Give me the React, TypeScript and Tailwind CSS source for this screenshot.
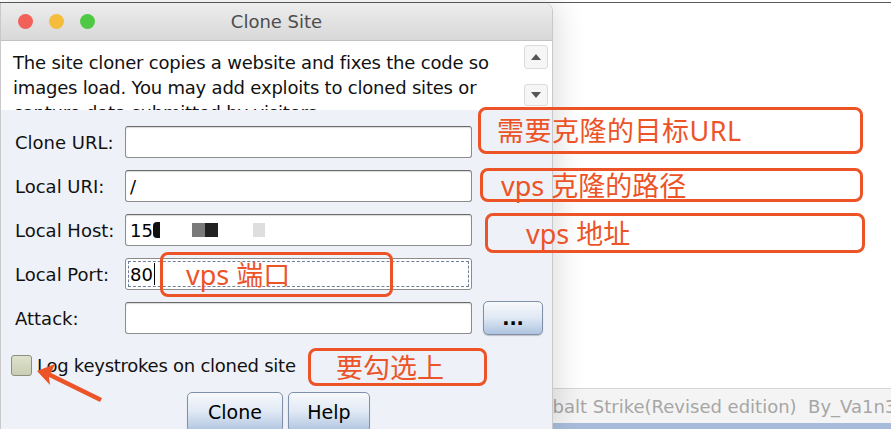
import React from "react";

const ui = { fontFamily: "'DejaVu Sans', Verdana, sans-serif" };
const cn = { fontFamily: "'Noto Sans', 'Noto Sans CJK SC', sans-serif" };

const rows = [
  { label: "Clone URL:", value: "" },
  { label: "Local URI:", value: "/" },
  { label: "Local Host:", value: "host" },
  { label: "Local Port:", value: "80" },
  { label: "Attack:", value: "" },
];

const Field = ({ value }: { value: string }) => {
  if (value === "80") {
    return (
      <div className="w-[347px] h-[32px] rounded-[3px] border border-[#8c8c8c] bg-white p-[2px]">
        <div className="h-full border border-dashed border-[#6f7f99] flex items-center pl-[1px] text-[18px] text-black">
          80<span className="w-[1px] h-[22px] bg-black ml-[1px]" />
        </div>
      </div>
    );
  }
  return (
    <div className="w-[347px] h-[32px] rounded-[3px] border border-[#8c8c8c] border-t-[#6b6b6b] bg-white flex items-center px-[4px] text-[18px] text-black shadow-[inset_0_1px_1px_rgba(0,0,0,0.15)]">
      {value === "host" ? (
        <>
          <span>15</span>
          <span className="w-[7px] h-[16px] bg-[#111] rounded-l-[4px]" />
          <span className="w-[32px]" />
          <span className="w-[13px] h-[14px] bg-[#7a7a7a]" />
          <span className="w-[13px] h-[14px] bg-[#222]" />
          <span className="w-[35px]" />
          <span className="w-[12px] h-[14px] bg-[#dedede]" />
        </>
      ) : (
        value
      )}
    </div>
  );
};

const Note = ({ className, text, textClass }: { className: string; text: string; textClass: string }) => (
  <div className={"absolute z-20 border-[3px] border-[#ec5428] rounded-[8px] flex items-center " + className}>
    <span className={"text-[#ec5428] text-[27px] leading-none " + textClass} style={cn}>
      {text}
    </span>
  </div>
);

const BlueButton = ({ children, className }: { children: React.ReactNode; className: string }) => (
  <div
    className={
      "rounded-[5px] border border-[#7f90a8] bg-gradient-to-b from-[#f7f9fc] via-[#dfe8f4] to-[#afc4e0] flex items-center justify-center text-[19px] text-black shadow-[0_1px_1px_rgba(0,0,0,0.2)] " +
      className
    }
  >
    {children}
  </div>
);

export default function App() {
  return (
    <div className="relative w-[891px] h-[429px] overflow-hidden bg-white pt-[2px]" style={ui}>
      <div className="h-full border-t border-[#5a5a5a] flex">
        {/* dialog */}
        <div className="relative z-10 w-[553px] shrink-0 flex flex-col bg-[#eef1f8] border-l border-r border-[#c9c9c9] rounded-tr-[8px] shadow-[6px_0_28px_rgba(0,0,0,0.13)]">
          <div className="h-[38px] shrink-0 rounded-tr-[8px] bg-gradient-to-b from-[#ededed] to-[#d8d8d8] border-b border-[#c2c2c2] flex items-center relative">
            <div className="flex gap-[16px] pl-[17px]">
              <span className="w-[15px] h-[15px] rounded-full bg-[#f1615a]" />
              <span className="w-[15px] h-[15px] rounded-full bg-[#f6bd3c]" />
              <span className="w-[15px] h-[15px] rounded-full bg-[#4fc844]" />
            </div>
            <span className="absolute left-0 right-0 text-center text-[18px] text-[#4d4d4d]">Clone Site</span>
          </div>
          <div className="h-[69px] shrink-0 bg-white flex overflow-hidden">
            <p className="flex-1 pl-[12px] pr-[6px] pt-[9px] text-[18px] leading-[25px] text-[#111] tracking-[-0.2px]">
              The site cloner copies a website and fixes the code so images load. You may add exploits to cloned sites or
              capture data submitted by visitors
            </p>
            <div className="w-[28px] flex flex-col justify-between py-[4px] pr-[4px]">
              <div className="h-[24px] rounded-[3px] border border-[#dcdcdc] bg-[#f6f6f6] flex items-center justify-center">
                <svg width="10" height="6" viewBox="0 0 10 6">
                  <path d="M0 6 L5 0 L10 6 Z" fill="#555" />
                </svg>
              </div>
              <div className="h-[22px] rounded-[3px] border border-[#dcdcdc] bg-[#f6f6f6] flex items-center justify-center">
                <svg width="10" height="6" viewBox="0 0 10 6">
                  <path d="M0 0 L5 6 L10 0 Z" fill="#555" />
                </svg>
              </div>
            </div>
          </div>
          <div className="flex flex-col gap-[12px] pt-[16px] pl-[14px]">
            {rows.map((r) => (
              <div key={r.label} className="flex items-center h-[32px]">
                <span className="w-[110px] text-[18px] text-[#111]">{r.label}</span>
                <Field value={r.value} />
                {r.label === "Attack:" && (
                  <BlueButton className="ml-[11px] w-[60px] h-[34px] font-bold text-[15px]">...</BlueButton>
                )}
              </div>
            ))}
          </div>
          <div className="flex items-center gap-[5px] pl-[10px] pt-[18px]">
            <span className="w-[21px] h-[21px] rounded-[3px] border border-[#8b907c] bg-gradient-to-b from-[#dfe2cc] to-[#c9cdb2]" />
            <span className="text-[18px] text-[#111] tracking-[-0.25px]">Log keystrokes on cloned site</span>
          </div>
          <div className="flex gap-[5px] pl-[186px] pt-[13px]">
            <BlueButton className="w-[96px] h-[40px]">Clone</BlueButton>
            <BlueButton className="w-[82px] h-[40px]">Help</BlueButton>
          </div>
        </div>

        {/* background window */}
        <div className="flex-1 flex flex-col">
          <div className="flex-1 bg-white" />
          <div className="h-[35px] bg-[#f4f4f4] border-t border-[#d6d6d6] flex items-center overflow-hidden">
            <span className="-ml-[24px] whitespace-nowrap text-[18px] text-[#a6a6a6]">
              Cobalt Strike(Revised edition)&nbsp; By_Va1n3
            </span>
          </div>
          <div className="h-[6px] bg-[#a7bcdb]" />
        </div>
      </div>

      {/* annotations */}
      <Note className="left-[478px] top-[107px] w-[385px] h-[47px]" text="需要克隆的目标URL" textClass="ml-[16px] tracking-[0.5px]" />
      <Note className="left-[480px] top-[168px] w-[383px] h-[34px]" text="vps 克隆的路径" textClass="ml-[18px]" />
      <Note className="left-[485px] top-[213px] w-[380px] h-[40px]" text="vps 地址" textClass="ml-[38px]" />
      <Note className="left-[160px] top-[252px] w-[233px] h-[45px]" text="vps 端口" textClass="ml-[23px]" />
      <Note className="left-[308px] top-[348px] w-[179px] h-[38px]" text="要勾选上" textClass="ml-[25px]" />
      <svg className="absolute left-0 top-0 z-20" width="891" height="429" viewBox="0 0 891 429">
        <polygon points="37,371 55,364 51,373 102,398 100,402 49,377 50,385" fill="#ec5428" />
      </svg>
    </div>
  );
}
